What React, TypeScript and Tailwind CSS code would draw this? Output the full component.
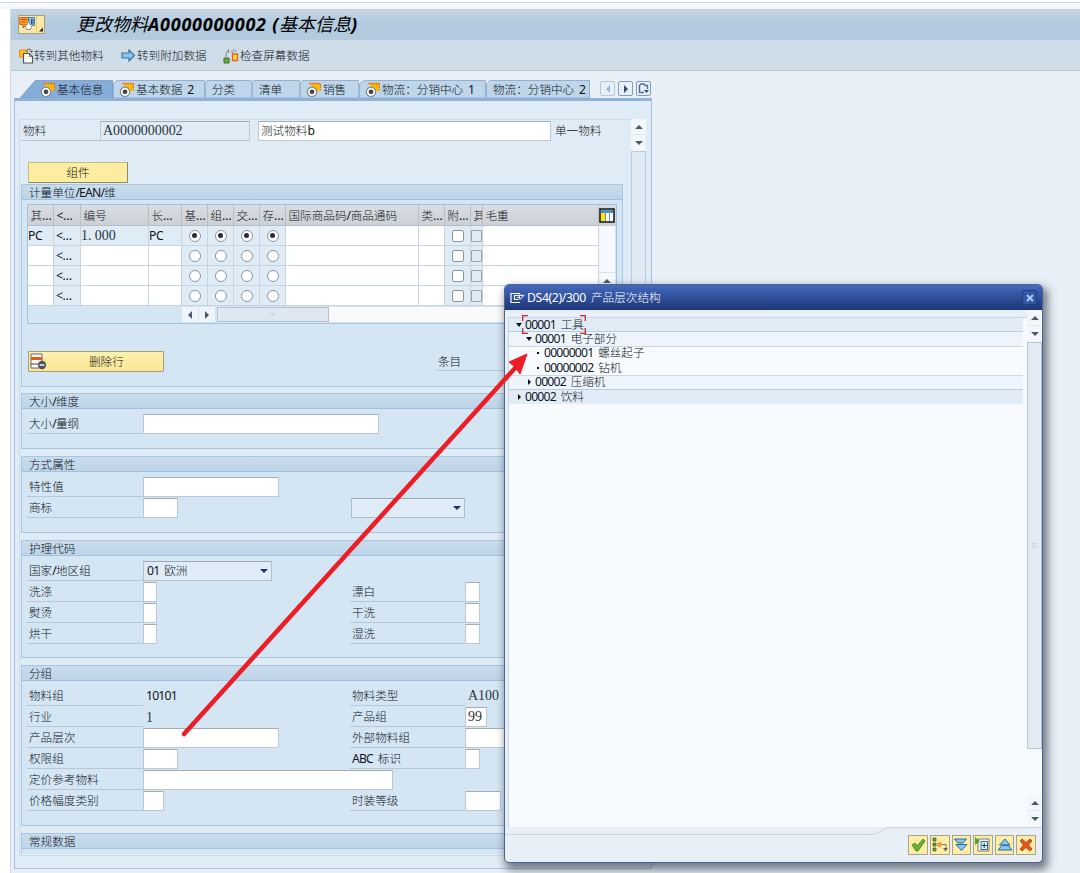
import React from 'react';
import clsx from 'clsx';

// Splits mixed strings so the Latin runs can be set tighter than the Chinese ones
function Txt({ children, className, latin = 'tracking-[-0.8px]' }: { children: string; className?: string; latin?: string }) {
  const runs = children.match(/[\x20-\x7e…]+|[^\x20-\x7e…]+/g) ?? [];
  return (
    <span
      className={clsx(
        "whitespace-pre font-['Noto_Sans','Noto_Sans_CJK_SC',sans-serif] text-[11.6px] leading-[16px]",
        className,
      )}
    >
      {runs.map((run, i) =>
        /^[\x20-\x7e…]/.test(run) ? (
          <span key={i} className={clsx('text-[12.2px] leading-none [word-spacing:2.4px]', latin)}>{run}</span>
        ) : (
          <span key={i} className="font-light">{run}</span>
        ),
      )}
    </span>
  );
}

function Mono({ children }: { children: string }) {
  return (
    <span className="font-['Liberation_Serif',serif] text-[14px] leading-[16px] tracking-[-0.05px] text-[#2b3540]">
      {children}
    </span>
  );
}

function Arrow({ dir, className }: { dir: 'up' | 'down' | 'left' | 'right'; className?: string }) {
  const d = {
    up: 'M0 6 L4 2 L8 6Z',
    down: 'M0 2 L4 6 L8 2Z',
    left: 'M6 0 L2 4 L6 8Z',
    right: 'M2 0 L6 4 L2 8Z',
  }[dir];
  return (
    <svg viewBox="0 0 8 8" className={clsx('h-2 w-2 shrink-0', className ?? 'text-[#465b6b]')}>
      <path d={d} fill="currentColor" />
    </svg>
  );
}

/* ---------- Icons ---------- */

function MenuIcon() {
  return (
    <svg width="25" height="17" viewBox="0 0 25 17">
      <path d="M17.500 0v17" stroke="#e0cc85" />
      <path d="M.8 1.500h9v7H7L4 12V8.500H.8z" fill="#f9a51f" stroke="#d9562b" />
      <path d="M2.500 3.500h6M2.500 6h4" stroke="#d2491f" />
      <path d="M9.500 1.500h6v8h-6z" fill="#8ec3e6" stroke="#4a7dab" />
      <path d="M12.500 3v5M14 3v5" stroke="#24557f" />
      <path d="M5.500 8.500l2 1 2-4.500 1.500 4 2.500-1-2 5.500h-4z" fill="#fff" stroke="#777" strokeWidth=".8" />
      <path d="M24 11.500v4h-4z" fill="#222" />
    </svg>
  );
}

function OtherMaterialIcon() {
  return (
    <svg width="15" height="16" viewBox="0 0 15 16">
      <path d="M.5 2h8v7h-8z" fill="#ffc20e" stroke="#ea8a1a" />
      <path d="M7.500 4c0-4 5-4 5 0M10.500 2.500l2 2 1.500-2" stroke="#666" fill="none" />
      <path d="M4.500 5.500h6l3 3v6.500h-9z" fill="#fff" stroke="#555" strokeWidth="1.200" />
      <path d="M10.500 5.500v3h3" fill="none" stroke="#555" strokeWidth=".8" />
    </svg>
  );
}

function GoArrowIcon() {
  return (
    <svg width="15" height="13" viewBox="0 0 15 13">
      <path d="M1 4h7V1l5.500 5.500L8 12V9H1z" fill="#8fc3e8" stroke="#3576a8" strokeWidth="1.200" />
    </svg>
  );
}

function CheckDataIcon() {
  return (
    <svg width="16" height="16" viewBox="0 0 16 16">
      <path d="M3 9V6q0-3 3-3M5.500 1v4M8 3l1.500 1.500L11 1M12 3h2" stroke="#8a8a8a" fill="none" />
      <path d="M1 10h5v5H1z" fill="#5fae32" stroke="#3c6e20" />
      <path d="M9.500 6h5v6.500h-5z" fill="#ffd34a" stroke="#e2621d" strokeWidth="1.300" />
    </svg>
  );
}

function ViewIcon() {
  return (
    <svg width="16" height="16" viewBox="0 0 16 16" className="shrink-0">
      <path d="M3.500 1.500h11.500L14 8.500 9 9.500z" fill="#ffb800" />
      <path d="M3.500 1.500h11.500" stroke="#e4602a" strokeWidth="1.500" strokeDasharray="1.500 .8" />
      <path d="M14.500 2v7" stroke="#e4602a" strokeDasharray="1.500 1" />
      <circle cx="6" cy="9.800" r="4.700" fill="#fafafa" stroke="#85898e" strokeWidth="1.200" />
      <circle cx="6" cy="9.800" r="2.400" fill="#444a52" />
    </svg>
  );
}

function TableConfigIcon() {
  return (
    <svg width="16" height="15" viewBox="0 0 16 15">
      <path d="M1 1h14v13H1z" fill="#fff" stroke="#111" strokeWidth="1.500" />
      <path d="M2 2h12v3H2z" fill="#3f8fc8" />
      <path d="M2 5h4v8H2z" fill="#ffe400" />
      <path d="M6.500 2v11M10.500 2v11" stroke="#6c8fae" />
    </svg>
  );
}

function DeleteRowIcon() {
  return (
    <svg width="17" height="17" viewBox="0 0 17 17">
      <path d="M1 1h11v14H1z" fill="#fff" stroke="#666" />
      <path d="M1 4h11v3H1z" fill="#e55a17" />
      <path d="M1 11h7" stroke="#444" />
      <circle cx="12" cy="12" r="4.200" fill="#4d565e" />
      <path d="M9.500 12h5" stroke="#fff" strokeWidth="1.400" />
    </svg>
  );
}

/* ---------- Form parts ---------- */

function Input({ className, children }: { className: string; children?: React.ReactNode }) {
  return (
    <div
      className={clsx(
        'flex h-5 shrink-0 items-center border border-[#bfc8d0] border-t-[#a3adb8] bg-white pl-[2px]',
        className,
      )}
    >
      {children}
    </div>
  );
}

function Select({ className, value = '' }: { className: string; value?: string }) {
  return (
    <div className={clsx('flex h-5 items-center justify-between border border-[#b3bfca] border-t-[#9daab6] bg-[#dfebf5] pr-[3px] pl-[3px]', className)}>
      <Txt>{value}</Txt>
      <Arrow dir="down" className="text-[#1f3468]" />
    </div>
  );
}

function Label({ text }: { text?: string }) {
  if (!text) return <div />;
  return (
    <div className="flex h-5 items-center border-b border-[#b9c7d3] pt-px pl-[2px]">
      <Txt>{text}</Txt>
    </div>
  );
}

interface RowProps {
  label: string;
  field: React.ReactNode;
  label2?: string;
  field2?: React.ReactNode;
}

function Row({ label, field, label2, field2 }: RowProps) {
  return (
    <div className="grid h-5 grid-cols-[116px_207px_115px_1fr]">
      <Label text={label} />
      {field}
      <Label text={label2} />
      {field2}
    </div>
  );
}

function Group({ title, className, children }: { title: string; className: string; children?: React.ReactNode }) {
  return (
    <section className={clsx('w-[602px] border border-[#aac5e1] bg-[#d4e5f3]', className)}>
      <h2 className="flex h-[15px] items-center border-b border-[#a5c0dd] bg-linear-to-b from-[#c9dcec] to-[#bdd4e9] pt-px pl-[7px]">
        <Txt>{title}</Txt>
      </h2>
      {children}
    </section>
  );
}

/* ---------- Header ---------- */

function TitleBar() {
  return (
    <header className="shrink-0">
      <div className="flex h-[30px] items-center border-t border-[#c3d0dd] bg-linear-to-b from-[#c3d5e5] via-[#b2cadd] to-[#b2c9df] pl-[7px]">
        <div className="flex h-[19px] w-[27px] items-center border border-[#a39f86] bg-[#fbe9a4]">
          <MenuIcon />
        </div>
        <h1 className="ml-[31px] pb-px whitespace-pre font-['Noto_Sans','Noto_Sans_CJK_SC',sans-serif] text-[18px] leading-[26px] text-black italic">
          更改物料<span className="font-bold tracking-[0.75px]">A0000000002 (</span>基本信息<span className="font-bold">)</span>
        </h1>
      </div>
      <div className="flex h-8 items-center border-y border-[#b9c9d8] bg-[#cfdde8] pt-px pl-[8px]">
        <OtherMaterialIcon />
        <Txt className="w-[87px]">转到其他物料</Txt>
        <GoArrowIcon />
        <Txt className="w-[87px] pl-px">转到附加数据</Txt>
        <CheckDataIcon />
        <Txt className="pl-px">检查屏幕数据</Txt>
      </div>
    </header>
  );
}

const tabs = [
  { label: '基本数据 2', icon: true, width: 'w-[92px]' },
  { label: '分类', icon: false, width: 'w-[47px]' },
  { label: '清单', icon: false, width: 'w-[48px]' },
  { label: '销售', icon: true, width: 'w-[59px]' },
  { label: '物流：分销中心 1', icon: true, width: 'w-[127px]' },
  { label: '物流：分销中心 2', icon: false, width: 'w-[104px]' },
];

function TabStrip() {
  return (
    <nav className="flex h-[27px] items-end pl-[9px]">
      <div className="relative flex h-[18px] w-[93px] items-center pt-px pl-[20px]">
        <svg className="absolute inset-0 h-full w-full" viewBox="0 0 93 19" preserveAspectRatio="none">
          <path d="M0 19L15 1q1-1 3-1H92.500V19z" fill="#86acd8" stroke="#7ba0cb" />
        </svg>
        <div className="relative flex items-center gap-px">
          <ViewIcon />
          <Txt>基本信息</Txt>
        </div>
      </div>
      {tabs.map((tab) => (
        <div key={tab.label} className={clsx('relative flex h-[18px] items-center pt-px', tab.width, tab.icon ? 'pl-[6px]' : 'pl-[7px]')}>
          <svg className="absolute inset-0 h-full w-full" viewBox="0 0 100 19" preserveAspectRatio="none">
            <path d="M.5 19V4L4 .5H99.500V19z" fill="#bed5ea" stroke="#91afcf" vectorEffect="non-scaling-stroke" />
          </svg>
          <div className="relative flex items-center gap-px">
            {tab.icon && <ViewIcon />}
            <Txt>{tab.label}</Txt>
          </div>
        </div>
      ))}
      <div className="ml-[10px] flex gap-[3px] pb-[2px]">
        <div className="flex h-[15px] w-[15px] items-center justify-center rounded-[2px] border border-[#b2c8dd]">
          <Arrow dir="left" className="text-[#9ab6d2]" />
        </div>
        <div className="flex h-[15px] w-[15px] items-center justify-center rounded-[2px] border border-[#7f9fbe]">
          <Arrow dir="right" className="text-[#2d4e76]" />
        </div>
        <div className="flex h-[15px] w-[15px] items-center justify-center rounded-[2px] border border-[#7f9fbe]">
          <svg width="11" height="11" viewBox="0 0 11 11">
            <path d="M6 9.500H1.500v-7L3 1h3l1 1.500h2.500V6" fill="none" stroke="#4c7193" strokeWidth="1.400" />
            <path d="M6 7h5L8.500 10z" fill="#2d4e76" />
          </svg>
        </div>
      </div>
    </nav>
  );
}

/* ---------- Units table ---------- */

const gridCols = 'grid grid-cols-[26px_27px_68px_33px_26px_26px_26px_26px_133px_26px_26px_12px_116px]';
const columns = ['其…', '<…', '编号', '长…', '基…', '组…', '交…', '存…', '国际商品码/商品通码', '类…', '附…', '其', '毛重'];

function Radio({ checked }: { checked: boolean }) {
  return (
    <span className="flex h-3 w-3 items-center justify-center rounded-full border border-[#8f959b] bg-white">
      {checked && <span className="h-[5px] w-[5px] rounded-full bg-[#26283f]" />}
    </span>
  );
}

function UnitRow({ filled }: { filled: boolean }) {
  const cell = 'flex items-center border-r border-b border-[#c8d5e1]';
  const tone = filled ? 'bg-[#dfebf5]' : 'bg-white';
  return (
    <div className={clsx(gridCols, 'h-5')}>
      <div className={clsx(cell, tone)}>{filled && <Txt latin="tracking-[-0.4px]">PC</Txt>}</div>
      <div className={clsx(cell, 'bg-[#dfebf5] pl-[2px]')}><Txt latin="tracking-[-0.4px]">{'<…'}</Txt></div>
      <div className={clsx(cell, tone)}>{filled && <Mono>1. 000</Mono>}</div>
      <div className={clsx(cell, tone)}>{filled && <Txt latin="tracking-[-0.4px]">PC</Txt>}</div>
      {[0, 1, 2, 3].map((i) => (
        <div key={i} className={clsx(cell, 'justify-center bg-[#dfebf5]')}>
          <Radio checked={filled} />
        </div>
      ))}
      <div className={clsx(cell, 'bg-white')} />
      <div className={clsx(cell, 'bg-white')} />
      <div className={clsx(cell, 'justify-center bg-[#dfebf5]')}>
        <span className="h-3 w-3 rounded-[2px] border border-[#8f959b] bg-white" />
      </div>
      <div className={clsx(cell, 'bg-[#dfebf5]')}>
        <span className="h-3 w-[11px] rounded-[1px] border border-[#9aa3ab]" />
      </div>
      <div className={clsx(cell, 'bg-white')} />
    </div>
  );
}

function UnitsTable() {
  return (
    <div className="h-[120px] w-[590px] border border-[#a5c2df] bg-[#d4e5f3]">
      <div className="flex h-[21px] bg-linear-to-b from-[#dadde1] to-[#cbd0d6]">
        <div className={gridCols}>
          {columns.map((name, i) => (
            <div key={i} className="flex items-center overflow-hidden border-r border-b border-[#b5bfc9] pt-px pl-[2.5px]">
              <Txt latin="tracking-[-0.4px]">{name}</Txt>
            </div>
          ))}
        </div>
        <div className="flex w-[16px] items-center justify-center">
          <TableConfigIcon />
        </div>
      </div>
      <div className="flex">
        <div>
          {[true, false, false, false].map((filled, i) => (
            <UnitRow key={i} filled={filled} />
          ))}
        </div>
        <div className="flex w-4 flex-col bg-[#f5f8fc]">
          <div className="h-[47px] border-b border-[#dae2ea]" />
          <div className="flex h-4 items-center justify-center">
            <Arrow dir="up" />
          </div>
        </div>
      </div>
      <div className="mt-px flex h-[15px] pl-[154px]">
        <div className="flex w-4 items-center justify-center bg-[#f1f5fa]"><Arrow dir="left" /></div>
        <div className="ml-px flex w-4 items-center justify-center bg-[#f1f5fa]"><Arrow dir="right" /></div>
        <div className="ml-[2px] flex w-[112px] items-center justify-center border border-[#b4c3d0] bg-[#dfe8f0]">
          <svg width="6" height="4" viewBox="0 0 6 4">
            <path d="M0 .5h6M0 2.500h6" stroke="#b3c1cd" strokeDasharray="1 1" />
          </svg>
        </div>
        <div className="w-[270px] bg-[#fafafb]" />
      </div>
    </div>
  );
}

/* ---------- Main panel ---------- */

function MaterialForm() {
  return (
    <div className="h-[737px] w-[612px] shrink-0 overflow-hidden border border-r-0 border-[#cbdbea] p-px">
      <div className="flex h-5">
        <div className="flex w-[79px] items-center border-b border-[#b9c7d3] pt-px pl-[2px]">
          <Txt>物料</Txt>
        </div>
        <Input className="w-[150px] bg-[#dfebf5]!"><Mono>A0000000002</Mono></Input>
        <Input className="ml-[8px] w-[293px]"><Txt>测试物料b</Txt></Input>
        <Txt className="pt-[2px] pl-[4px]">单一物料</Txt>
      </div>
      <div className="mt-[21px] ml-[7px] flex h-[21px] w-[100px] items-center justify-center border border-[#c6bd8b] border-r-[#8e8b70] border-b-[#8e8b70] bg-[#fdeda0]">
        <Txt>组件</Txt>
      </div>

      <Group title="计量单位/EAN/维" className="mt-px h-[203px]">
        <div className="pt-[4px] pl-[5px]">
          <UnitsTable />
          <div className="mt-[27px] flex">
            <div className="ml-px flex h-[21px] w-[136px] items-center rounded-[1px] border border-[#a59e78] bg-linear-to-b from-[#fdf0ae] to-[#fbe795]">
              <div className="pl-px"><DeleteRowIcon /></div>
              <Txt className="pt-px pl-[42px]">删除行</Txt>
            </div>
            <div className="ml-[272px] flex h-5 w-[80px] items-center border-b border-[#b9c7d3] pt-[2px] pl-[2px]">
              <Txt>条目</Txt>
            </div>
          </div>
        </div>
      </Group>

      <Group title="大小/维度" className="mt-[6px] h-[56px]">
        <div className="pt-[5px] pl-[5px]">
          <Row label="大小/量纲" field={<Input className="w-[236px]" />} />
        </div>
      </Group>

      <Group title="方式属性" className="mt-[7px] h-[77px]">
        <div className="flex flex-col gap-px pt-[5px] pl-[5px]">
          <Row label="特性值" field={<Input className="w-[136px]" />} />
          <div className="flex">
            <div className="w-[116px]"><Label text="商标" /></div>
            <Input className="w-[35px]" />
            <Select className="ml-[173px] w-[114px]" />
          </div>
        </div>
      </Group>

      <Group title="护理代码" className="mt-[7px] h-[118px]">
        <div className="flex flex-col gap-px pt-[5px] pl-[5px]">
          <Row label="国家/地区组" field={<Select className="w-[129px]" value="01 欧洲" />} />
          <Row label="洗涤" field={<Input className="w-[14px]" />} label2="漂白" field2={<Input className="w-[15px]" />} />
          <Row label="熨烫" field={<Input className="w-[14px]" />} label2="干洗" field2={<Input className="w-[15px]" />} />
          <Row label="烘干" field={<Input className="w-[14px]" />} label2="湿洗" field2={<Input className="w-[15px]" />} />
        </div>
      </Group>

      <Group title="分组" className="mt-[7px] h-[161px]">
        <div className="flex flex-col gap-px pt-[5px] pl-[5px]">
          <Row
            label="物料组"
            field={<Txt className="pt-[2px] pl-[3px]">10101</Txt>}
            label2="物料类型"
            field2={<div className="flex items-center pl-[3px]"><Mono>A100</Mono></div>}
          />
          <Row
            label="行业"
            field={<div className="flex items-center pt-px pl-[3px]"><Mono>1</Mono></div>}
            label2="产品组"
            field2={<Input className="w-[22px]"><Mono>99</Mono></Input>}
          />
          <Row label="产品层次" field={<Input className="w-[136px]" />} label2="外部物料组" field2={<Input className="w-[80px]" />} />
          <Row label="权限组" field={<Input className="w-[35px]" />} label2="ABC 标识" field2={<Input className="w-[15px]" />} />
          <Row label="定价参考物料" field={<Input className="w-[250px]" />} />
          <Row label="价格幅度类别" field={<Input className="w-[21px]" />} label2="时装等级" field2={<Input className="w-[36px]" />} />
        </div>
      </Group>

      <Group title="常规数据" className="mt-[7px] h-[21px] border-b-0" />
    </div>
  );
}

function ScrollButtons() {
  return (
    <>
      <div className="flex h-4 items-center justify-center border-b border-[#e2eaf2] bg-[#f3f7fb]"><Arrow dir="up" /></div>
      <div className="flex h-4 items-center justify-center bg-[#f3f7fb]"><Arrow dir="down" /></div>
    </>
  );
}

/* ---------- Dialog ---------- */

const tree = [
  { code: '00001', name: '工具', mark: 'down', indent: 'pl-[6px]', tone: 'bg-[#e1ecf7] border-[#b8cde0]', focused: true },
  { code: '00001', name: '电子部分', mark: 'down', indent: 'pl-[16px]', tone: 'bg-[#edf4fc] border-[#c8d8e6]' },
  { code: '00000001', name: '螺丝起子', mark: 'dot', indent: 'pl-[25px]', tone: 'border-transparent' },
  { code: '00000002', name: '钻机', mark: 'dot', indent: 'pl-[25px]', tone: 'border-[#c8d8e6]' },
  { code: '00002', name: '压缩机', mark: 'right', indent: 'pl-[16px]', tone: 'bg-[#edf4fc] border-[#b8cde0]' },
  { code: '00002', name: '饮料', mark: 'right', indent: 'pl-[6px]', tone: 'bg-[#e1ecf7] border-transparent' },
];

function TreeMark({ mark }: { mark: string }) {
  return (
    <svg width="8" height="8" viewBox="0 0 8 8" className="mr-[2px] shrink-0">
      {mark === 'down' && <path d="M1 2h6L4 6z" fill="#111" />}
      {mark === 'right' && <path d="M3 1l3 3-3 3z" fill="#111" />}
      {mark === 'dot' && <path d="M3 3h2v2H3z" fill="#111" />}
    </svg>
  );
}

const dialogButtons = [
  <path key="ok" d="M2 8l3-2 2 3 6-7 2 2-7 10H6z" fill="#67b52e" stroke="#3f7d1f" strokeWidth=".8" />,
  <g key="tree">
    <path d="M1 1h3v3H1zM1 6h3v3H1zM1 11h3v3H1z" fill="#5f9e38" stroke="#47692f" strokeWidth=".8" />
    <path d="M6 6h3v3H6z" fill="#ffd34a" stroke="#df6a1a" />
    <path d="M10 7.500h4V12" stroke="#777" fill="none" />
    <path d="M11 11h5l-2.500 3.500z" fill="#666" />
  </g>,
  <g key="down" fill="#8cc6ea" stroke="#236d9f" strokeLinejoin="round">
    <path d="M1.500 2h12L10 6H5z" />
    <path d="M3 7.500h11l-5.500 6z" />
  </g>,
  <g key="expand">
    <path d="M3 2h11v12H3z" fill="#fff" stroke="#777" />
    <path d="M6 4.500h6.500v8H6z" fill="#e6f3fb" stroke="#286b9d" />
    <path d="M9.200 6v5M6.800 8.500h5" stroke="#1a3f6a" />
    <path d="M0 0l5 4-5 4z" fill="#4da02b" />
  </g>,
  <g key="up" fill="#8cc6ea" stroke="#236d9f" strokeLinejoin="round">
    <path d="M2.500 8L8 2l5 6z" />
    <path d="M1 13l4-4.500h6.500L15 13z" />
  </g>,
  <path key="cancel" d="M2 4l2-2 4 3.500L12 2l2 2-3.500 4 3.500 4-2 2-4-3.500L4 14l-2-2 3.500-4z" fill="#e4551c" stroke="#a83b16" strokeWidth=".8" />,
];

function HierarchyDialog() {
  return (
    <div className="absolute top-[284px] left-[504px] flex h-[579px] w-[539px] flex-col overflow-hidden rounded-[5px] border border-[#4a629a] bg-[#e8eff7] shadow-[3px_5px_9px_2px_rgba(40,50,60,0.6)]">
      <div className="flex h-[25px] shrink-0 items-center bg-linear-to-b from-[#4569bd] to-[#1c3778] pr-[5px] pl-[5px]">
        <svg width="15" height="12" viewBox="0 0 15 12">
          <path d="M10 1.500H1v9h9M10.500 3.500h-6v4h4M7 5.500h3" fill="none" stroke="#fff" strokeWidth="1.200" />
          <path d="M9 3l5 .5-4 4z" fill="none" stroke="#fff" />
        </svg>
        <Txt className="ml-[2px] flex-1 text-white" latin="tracking-[-0.35px]">DS4(2)/300 产品层次结构</Txt>
        <div className="flex h-[15px] w-[15px] items-center justify-center rounded-[2px] border border-[#1f3d82] bg-[#3557a3]">
          <svg width="8" height="8" viewBox="0 0 8 8">
            <path d="M1 1l6 6M7 1L1 7" stroke="#a9caff" strokeWidth="2" />
          </svg>
        </div>
      </div>

      <div className="flex h-[517px] shrink-0">
        <div className="mt-[7px] ml-[3px] flex-1 border-t border-l border-[#c8d6e2] bg-[#f7fbff]">
          {tree.map((node, i) => (
            <div key={i} className={clsx('mr-1 flex h-[14.4px] items-center border-b', node.indent, node.tone)}>
              <TreeMark mark={node.mark} />
              <div className="relative flex items-center">
                <Txt className="leading-[14px]">{`${node.code} ${node.name}`}</Txt>
                {node.focused && (
                  <svg className="absolute -top-[2px] -left-[3px]" width="64" height="19" viewBox="0 0 64 19">
                    <path d="M.7 6V.7H6M58 .7h5.300V6M.7 13v5.300H6M58 18.300h5.300V13" fill="none" stroke="#c22a2a" strokeWidth="1.300" />
                  </svg>
                )}
              </div>
            </div>
          ))}
        </div>
        <div className="flex w-[15px] flex-col bg-[#f7fbff]">
          <ScrollButtons />
          <div className="flex h-[407px] items-center justify-center border border-[#b4c5d3] bg-[#e2ebf3]">
            <svg width="5" height="6" viewBox="0 0 5 6">
              <path d="M0 .5h5M0 2.500h5M0 4.500h5" stroke="#b7c7d5" strokeDasharray="1 1" />
            </svg>
          </div>
          <div className="flex-1" />
          <ScrollButtons />
        </div>
      </div>

      <div className="relative flex flex-1 items-start justify-end gap-[2px] pt-[8px] pr-[6px]">
        <svg className="absolute top-0 left-0" width="537" height="9" viewBox="0 0 537 9">
          <path d="M0 7.500H366q6 0 11-4 4-3 10-3H537" fill="none" stroke="#c9d4df" />
        </svg>
        {dialogButtons.map((shape, i) => (
          <div key={i} className="flex h-5 w-[19.6px] items-center justify-center border border-[#aaa386] bg-[#fdeda6]">
            <svg width="16" height="16" viewBox="0 0 16 16">{shape}</svg>
          </div>
        ))}
      </div>
    </div>
  );
}

export default function App() {
  return (
    <div className="relative h-[873px] w-[1080px] overflow-hidden bg-white text-[#10151b]">
      <div className="h-[9px] bg-linear-to-b from-white to-[#f1f4f9] pt-[2px]">
        <div className="h-px bg-[#cbd3df]" />
      </div>
      <div className="ml-[10px] flex h-[864px] flex-col border-l border-[#d0dae5] bg-[#e8eff7]">
        <TitleBar />
        <TabStrip />
        <main className="ml-[3px] flex h-[771px] w-[638px] shrink-0 border border-t-[3px] border-[#a9c4df] border-t-[#8fb2d8] bg-[#dfebf5] pt-[18px] pl-[4px]">
          <MaterialForm />
          <div className="mr-[5px] flex h-[737px] flex-1 flex-col">
            <ScrollButtons />
            <div className="flex-1 border border-[#bccbd9] bg-[#e0eaf3]" />
          </div>
        </main>
      </div>
      <HierarchyDialog />
      {/* Callout from the hierarchy field to the tree */}
      <svg className="pointer-events-none absolute inset-0" width="1080" height="873" viewBox="0 0 1080 873">
        <path d="M184 734L516 367" stroke="#ee1c25" strokeWidth="4.500" strokeLinecap="round" />
        <path d="M527 354L509 362l6 5 5 7z" fill="#ee1c25" stroke="#ee1c25" strokeLinejoin="round" />
      </svg>
    </div>
  );
}
